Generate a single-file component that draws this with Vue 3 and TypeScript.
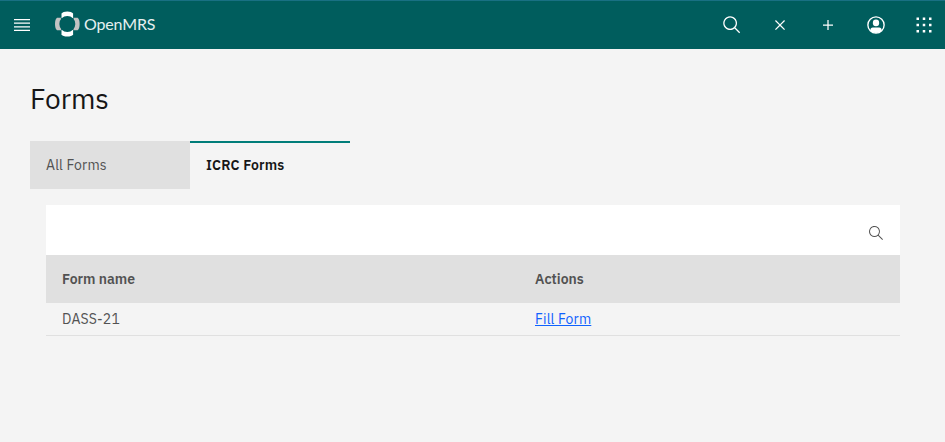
<script setup lang="ts">
import { ref } from 'vue'

interface FormRow {
  name: string
  action: string
}

const tabs = ['All Forms', 'ICRC Forms']
const active = ref(1)
const query = ref('')
const rows: FormRow[] = [{ name: 'DASS-21', action: 'Fill Form' }]
const dots = [4, 14, 24]
</script>

<template>
  <div class="page">
    <header class="bar">
      <button class="action menu" aria-label="Menu">
        <svg width="20" height="20" viewBox="0 0 20 20"><path d="M2 14.8H18V16H2zM2 11.2H18V12.4H2zM2 7.6H18V8.8H2zM2 4H18V5.2H2z" /></svg>
      </button>
      <a class="brand">
        <svg class="mark" width="26" height="26" viewBox="0 0 26 26">
          <path class="side" d="M7.2 6.8H3Q1 8.2 1 13T3 19.2H7.2Z" />
          <path class="side" d="M19.4 6.8h4.2q2 1.4 2 6.2t-2 6.2h-4.2Z" />
          <path d="M7.5 7.2V2.5Q9 .5 13.3 .5t5.8 2v4.7Z" />
          <path d="M7.5 18.8v4.7q1.5 2 5.8 2t5.8-2v-4.7Z" />
          <circle class="hole" cx="13.3" cy="13" r="8" />
        </svg>
        <span class="word">OpenMRS</span>
      </a>
      <nav class="tools">
        <button class="action" aria-label="Search">
          <svg width="20" height="20" viewBox="0 0 32 32"><path d="M29,27.5859l-7.5521-7.5521a11.0177,11.0177,0,1,0-1.4141,1.4141L27.5859,29ZM4,13a9,9,0,1,1,9,9A9.01,9.01,0,0,1,4,13Z" /></svg>
        </button>
        <button class="action" aria-label="Close">
          <svg width="20" height="20" viewBox="0 0 32 32"><path d="M24 9.4L22.6 8 16 14.6 9.4 8 8 9.4 14.6 16 8 22.6 9.4 24 16 17.4 22.6 24 24 22.6 17.4 16z" /></svg>
        </button>
        <button class="action" aria-label="Add">
          <svg width="20" height="20" viewBox="0 0 32 32"><path d="M17 15L17 8 15 8 15 15 8 15 8 17 15 17 15 24 17 24 17 17 24 17 24 15z" /></svg>
        </button>
        <button class="action" aria-label="User">
          <svg width="20" height="20" viewBox="0 0 32 32">
            <circle class="ring" cx="16" cy="16" r="13" />
            <rect x="11" y="7" width="10" height="11" rx="4.8" />
            <path d="M7 25v-1a4 4 0 0 1 4-4h10a4 4 0 0 1 4 4v1a13 13 0 0 1-18 0Z" />
          </svg>
        </button>
        <button class="action" aria-label="App menu">
          <svg width="20" height="20" viewBox="0 0 32 32">
            <template v-for="y in dots" :key="y">
              <rect v-for="x in dots" :key="x" :x="x" :y="y" width="4" height="4" />
            </template>
          </svg>
        </button>
      </nav>
    </header>

    <main class="content">
      <h1>Forms</h1>
      <div class="tabs" role="tablist">
        <button
          v-for="(tab, i) in tabs"
          :key="tab"
          class="tab"
          :class="{ selected: active === i }"
          role="tab"
          @click="active = i"
        >{{ tab }}</button>
      </div>
      <section class="panel">
        <label class="search">
          <input v-model="query" type="text" aria-label="Search forms" />
          <svg width="16" height="16" viewBox="0 0 16 16"><path d="M15,14.3L10.7,10c1.9-2.3,1.6-5.8-0.7-7.7S4.2,0.7,2.3,3S0.7,8.8,3,10.7c2,1.7,5,1.7,7,0l4.3,4.3L15,14.3z M2,6.5C2,4,4,2,6.5,2S11,4,11,6.5S9,11,6.5,11S2,9,2,6.5z" /></svg>
        </label>
        <div class="row head">
          <span>Form name</span>
          <span>Actions</span>
        </div>
        <div v-for="row in rows" :key="row.name" class="row">
          <span>{{ row.name }}</span>
          <a class="link">{{ row.action }}</a>
        </div>
      </section>
    </main>
  </div>
</template>

<style>
body {
  background: #f4f4f4;
}
</style>

<style scoped>
.page {
  height: 442px;
  background: #f4f4f4;
  font-family: "IBM Plex Sans", Roboto, "Liberation Sans", sans-serif;
  font-size: 14px;
  color: #161616;
  overflow: hidden;
}
button {
  border: 0;
  padding: 0;
  margin: 0;
  background: none;
  font: inherit;
  text-align: left;
}
.bar {
  box-sizing: border-box;
  height: 49px;
  display: flex;
  background: #005d5d;
  border-top: 1px solid #197083;
}
.action {
  width: 48px;
  height: 48px;
  display: flex;
  align-items: center;
  justify-content: center;
}
.action.menu {
  width: 44px;
}
svg {
  display: block;
  fill: #fff;
}
.ring {
  fill: none;
  stroke: #fff;
  stroke-width: 2.2;
}
.side {
  fill: #c3c3c3;
}
.hole {
  fill: #005d5d;
}
.brand {
  display: flex;
  align-items: center;
  gap: 4px;
  padding-left: 10px;
}
.mark {
  margin-bottom: 2px;
}
.word {
  margin-bottom: 3px;
  font-family: Lato, sans-serif;
  font-size: 16px;
  line-height: 20px;
  letter-spacing: -0.15px;
  color: #e6f0f0;
}
.tools {
  display: flex;
  margin-left: auto;
  margin-right: -3px;
}
.content {
  padding: 32px 45px 0 30px;
}
h1 {
  margin: 0;
  font-size: 28px;
  line-height: 36px;
  font-weight: 400;
}
.tabs {
  display: flex;
  margin-top: 24px;
}
.tab {
  box-sizing: border-box;
  width: 160px;
  height: 48px;
  padding: 0 16px;
  background: #e0e0e0;
  color: #525252;
  letter-spacing: 0.16px;
}
.tab.selected {
  background: #f4f4f4;
  border-top: 2px solid #007d79;
  padding-bottom: 2px;
  color: #161616;
  font-weight: 600;
}
.panel {
  margin: 16px 0 0 16px;
}
.search {
  box-sizing: border-box;
  display: flex;
  align-items: center;
  height: 50px;
  padding: 6px 16px 0;
  background: #fff;
}
.search input {
  flex: 1;
  border: 0;
  outline: 0;
  background: transparent;
  font: inherit;
}
.search svg {
  fill: #525252;
}
.row {
  box-sizing: border-box;
  display: grid;
  grid-template-columns: 473px 1fr;
  align-items: center;
  justify-items: start;
  height: 33px;
  padding: 0 16px;
  border-bottom: 1px solid #e0e0e0;
  color: #525252;
  letter-spacing: 0.16px;
}
.row.head {
  height: 48px;
  background: #e0e0e0;
  font-weight: 600;
  letter-spacing: 0;
}
.link {
  color: #0f62fe;
  text-decoration: underline;
}
</style>
